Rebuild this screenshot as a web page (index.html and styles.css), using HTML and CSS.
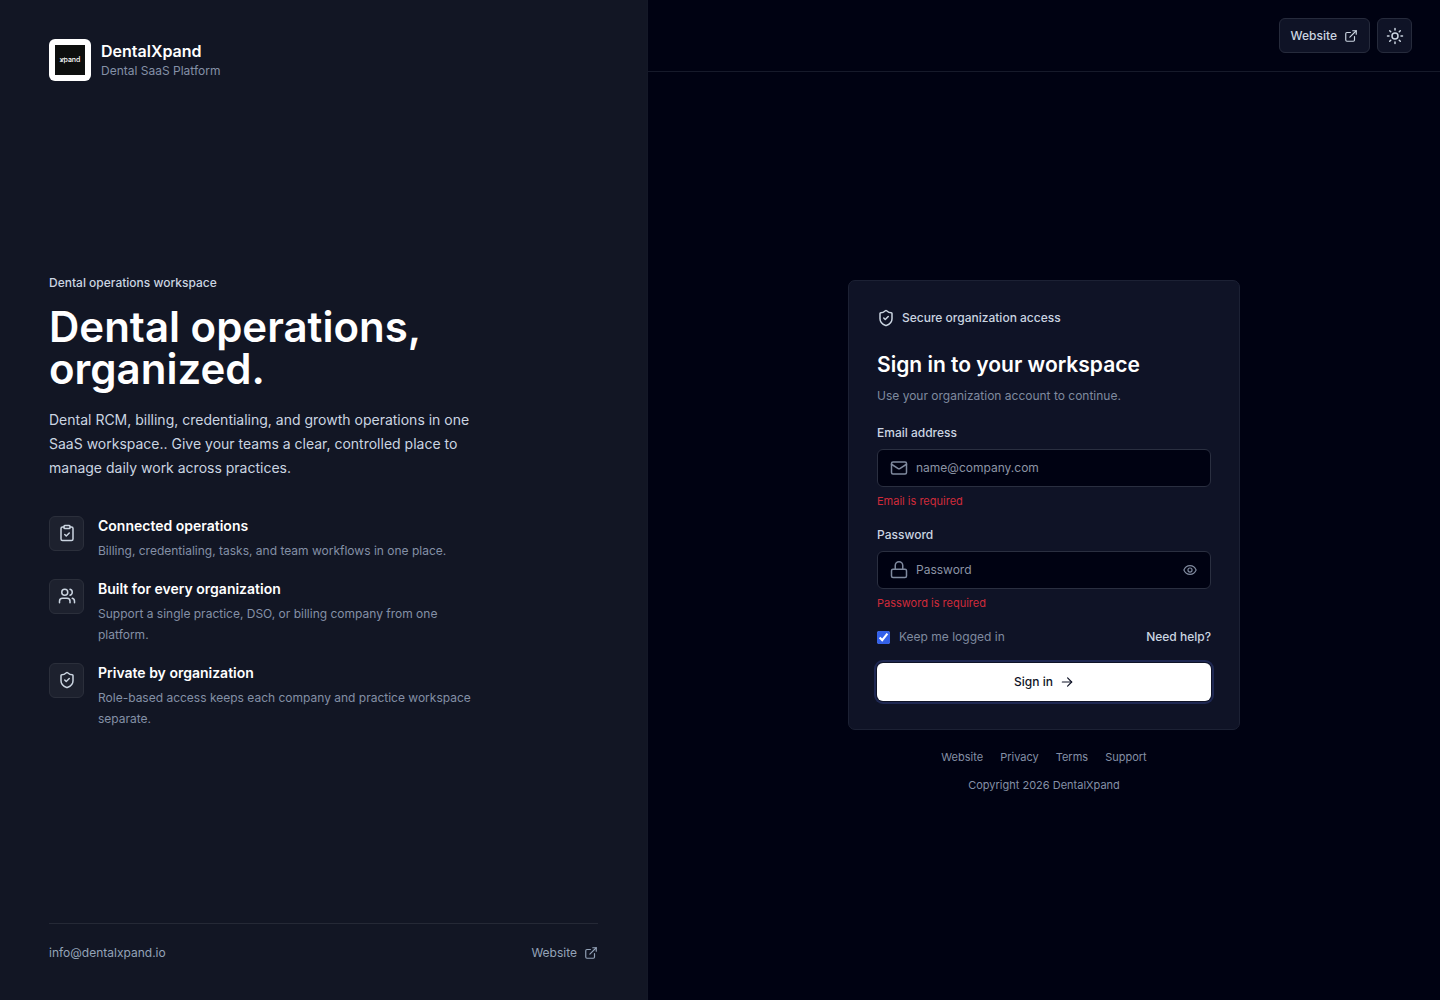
FILE: index.html
```html
<!DOCTYPE html>
<html lang="en">
<head>
  <meta charset="UTF-8" />
  <meta name="viewport" content="width=device-width, initial-scale=1" />
  <title>Sign in - DentalXpand</title>
  <link rel="stylesheet" href="styles.css">
</head>
<body>
  <div class="layout">
    <aside class="intro">
      <div class="brand">
        <div class="brand-logo">
          <svg viewBox="0 0 30 30"><rect width="30" height="30" fill="#0d0f0e"/><text x="15" y="17" text-anchor="middle">xpand</text><path d="M6 17 9.500 12.500" stroke="#fff" stroke-width=".8"/></svg>
        </div>
        <div>
          <div class="brand-name">DentalXpand</div>
          <div class="brand-tag">Dental SaaS Platform</div>
        </div>
      </div>

      <div class="pitch">
        <p class="eyebrow">Dental operations workspace</p>
        <h1>Dental operations, organized.</h1>
        <p class="lead">Dental RCM, billing, credentialing, and growth operations in one SaaS workspace.. Give your teams a clear, controlled place to manage daily work across practices.</p>
        <ul class="features">
          <li>
            <span class="feature-icon">
              <svg class="icon" viewBox="0 0 24 24"><rect x="8" y="2" width="8" height="4" rx="1"/><path d="M16 4h2a2 2 0 0 1 2 2v14a2 2 0 0 1-2 2H6a2 2 0 0 1-2-2V6a2 2 0 0 1 2-2h2"/><path d="m9 14 2 2 4-4"/></svg>
            </span>
            <div>
              <h3>Connected operations</h3>
              <p>Billing, credentialing, tasks, and team workflows in one place.</p>
            </div>
          </li>
          <li>
            <span class="feature-icon">
              <svg class="icon" viewBox="0 0 24 24"><path d="M16 21v-2a4 4 0 0 0-4-4H6a4 4 0 0 0-4 4v2"/><circle cx="9" cy="7" r="4"/><path d="M22 21v-2a4 4 0 0 0-3-3.870"/><path d="M16 3.130a4 4 0 0 1 0 7.750"/></svg>
            </span>
            <div>
              <h3>Built for every organization</h3>
              <p>Support a single practice, DSO, or billing company from one platform.</p>
            </div>
          </li>
          <li>
            <span class="feature-icon">
              <svg class="icon" viewBox="0 0 24 24"><path d="M20 13c0 5-3.500 7.500-7.660 8.950a1 1 0 0 1-.67-.01C7.500 20.500 4 18 4 13V6a1 1 0 0 1 1-1c2 0 4.500-1.200 6.240-2.720a1.170 1.170 0 0 1 1.520 0C14.510 3.810 17 5 19 5a1 1 0 0 1 1 1z"/><path d="m9 12 2 2 4-4"/></svg>
            </span>
            <div>
              <h3>Private by organization</h3>
              <p>Role-based access keeps each company and practice workspace separate.</p>
            </div>
          </li>
        </ul>
      </div>

      <footer class="intro-footer">
        <a href="mailto:info@dentalxpand.io">info@dentalxpand.io</a>
        <a href="#">Website
          <svg class="icon icon-sm" viewBox="0 0 24 24"><path d="M15 3h6v6"/><path d="M10 14 21 3"/><path d="M18 13v6a2 2 0 0 1-2 2H5a2 2 0 0 1-2-2V8a2 2 0 0 1 2-2h6"/></svg>
        </a>
      </footer>
    </aside>

    <div class="panel">
      <header class="topbar">
        <a class="top-btn" href="#">Website
          <svg class="icon icon-sm" viewBox="0 0 24 24"><path d="M15 3h6v6"/><path d="M10 14 21 3"/><path d="M18 13v6a2 2 0 0 1-2 2H5a2 2 0 0 1-2-2V8a2 2 0 0 1 2-2h6"/></svg>
        </a>
        <button class="top-btn theme-btn" type="button" aria-label="Toggle theme">
          <svg class="icon" viewBox="0 0 24 24"><circle cx="12" cy="12" r="4"/><path d="M12 2v2M12 20v2M4.930 4.930l1.410 1.410M17.660 17.660l1.410 1.410M2 12h2M20 12h2M6.340 17.660l-1.410 1.410M19.070 4.930l-1.410 1.410"/></svg>
        </button>
      </header>

      <main class="content">
        <section class="card">
          <div class="secure">
            <svg class="icon" viewBox="0 0 24 24"><path d="M20 13c0 5-3.500 7.500-7.660 8.950a1 1 0 0 1-.67-.01C7.500 20.500 4 18 4 13V6a1 1 0 0 1 1-1c2 0 4.500-1.200 6.240-2.720a1.170 1.170 0 0 1 1.520 0C14.510 3.810 17 5 19 5a1 1 0 0 1 1 1z"/><path d="m9 12 2 2 4-4"/></svg>
            Secure organization access
          </div>
          <h2>Sign in to your workspace</h2>
          <p class="sub">Use your organization account to continue.</p>

          <form>
            <div class="field">
              <label for="email">Email address</label>
              <div class="control">
                <svg class="icon" viewBox="0 0 24 24"><rect x="2" y="4" width="20" height="16" rx="2"/><path d="m22 7-8.970 5.700a1.940 1.940 0 0 1-2.060 0L2 7"/></svg>
                <input id="email" type="email" placeholder="name@company.com">
              </div>
              <p class="error">Email is required</p>
            </div>
            <div class="field">
              <label for="password">Password</label>
              <div class="control">
                <svg class="icon" viewBox="0 0 24 24"><rect x="2" y="11" width="20" height="11" rx="2"/><path d="M7 11V6a5 5 0 0 1 10 0v5"/></svg>
                <input id="password" type="password" placeholder="Password">
                <button class="eye-btn" type="button" aria-label="Show password">
                  <svg class="icon icon-sm" viewBox="0 0 24 24"><path d="M1.500 12C3.500 7 7.300 4.500 12 4.500S20.500 7 22.500 12c-2 5-5.800 7.500-10.500 7.500S3.500 17 1.500 12z"/><circle cx="12" cy="12" r="3.500"/></svg>
                </button>
              </div>
              <p class="error">Password is required</p>
            </div>
            <div class="options">
              <label class="keep"><input type="checkbox" checked> Keep me logged in</label>
              <a href="#">Need help?</a>
            </div>
            <button class="submit" type="submit">Sign in
              <svg class="icon icon-sm" viewBox="0 0 24 24"><path d="M4 12h16"/><path d="m13 5 7 7-7 7"/></svg>
            </button>
          </form>
        </section>

        <nav class="links">
          <a href="#">Website</a>
          <a href="#">Privacy</a>
          <a href="#">Terms</a>
          <a href="#">Support</a>
        </nav>
        <p class="copyright">Copyright 2026 DentalXpand</p>
      </main>
    </div>
  </div>
</body>
</html>
```

FILE: styles.css
```css
* { box-sizing: border-box; }
body { margin: 0; font-family: Inter, "Liberation Sans", sans-serif; font-size: 12px; line-height: 18px; background: #000212; color: #cbd5e1; }
h1, h2, h3, p, ul { margin: 0; padding: 0; }
a { color: inherit; text-decoration: none; }
button, input { font: inherit; }
.icon { width: 18px; height: 18px; flex: none; fill: none; stroke: currentColor; stroke-width: 2; stroke-linecap: round; stroke-linejoin: round; }
.icon-sm { width: 14px; height: 14px; }

.layout { display: grid; grid-template-columns: 45% 55%; min-height: 100vh; }

/* left side */
.intro { display: flex; flex-direction: column; justify-content: space-between; padding: 39px 49px 38px; background: #121624; border-right: 1px solid #141827; }
.brand { display: flex; align-items: center; gap: 10px; }
.brand-logo { width: 42px; height: 42px; padding: 6px; border-radius: 6px; background: #fff; }
.brand-logo svg { display: block; width: 30px; height: 30px; }
.brand-logo text { fill: #fff; font-size: 7px; font-weight: 500; }
.brand-name { color: #fff; font-size: 16px; font-weight: 600; line-height: 22px; }
.brand-tag { color: #8490a6; }
.eyebrow { color: #cbd5e1; font-weight: 500; }
.pitch { padding-bottom: 2px; }
.pitch h1 { max-width: 440px; margin-top: 14px; color: #fff; font-size: 42px; font-weight: 600; line-height: 42px; }
.lead { max-width: 440px; margin-top: 18px; font-size: 14px; line-height: 24px; }
.features { display: flex; flex-direction: column; gap: 18px; max-width: 440px; margin-top: 36px; list-style: none; }
.features li { display: flex; gap: 14px; }
.feature-icon { display: flex; align-items: center; justify-content: center; flex: none; width: 35px; height: 35px; border: 1px solid #2b2f3b; border-radius: 6px; background: #1d212e; }
.features h3 { color: #fff; font-size: 14px; font-weight: 600; line-height: 20px; }
.features p { margin-top: 4px; color: #8490a6; line-height: 21px; }
.intro-footer { display: flex; justify-content: space-between; padding-top: 20px; border-top: 1px solid #252936; color: #94a3b8; }
.intro-footer a { display: flex; align-items: center; gap: 7px; }

/* right side */
.panel { display: flex; flex-direction: column; }
.topbar { display: flex; justify-content: flex-end; gap: 7px; padding: 18px 28px; border-bottom: 1px solid #161a2a; }
.top-btn { display: flex; align-items: center; gap: 7px; height: 35px; padding: 0 11px; border: 1px solid #262b3c; border-radius: 6px; background: #0f1326; color: #cbd5e1; font-weight: 500; }
.theme-btn { justify-content: center; width: 35px; padding: 0; }
.content { display: flex; flex: 1; flex-direction: column; align-items: center; justify-content: center; }
.card { width: 100%; max-width: 392px; padding: 28px; border: 1px solid #1c2134; border-radius: 7px; background: #0f1326; }
.secure { display: flex; align-items: center; gap: 7px; font-weight: 500; }
.card h2 { margin-top: 24px; color: #fff; font-size: 21px; font-weight: 600; line-height: 28px; }
.sub { margin-top: 8px; color: #7f8a9f; }
form { margin-top: 19px; }
.field { margin-bottom: 17px; }
.field label { display: block; margin-bottom: 7px; font-weight: 500; }
.control { display: flex; align-items: center; gap: 8px; height: 38px; padding: 0 12px; border: 1px solid #2a2f40; border-radius: 6px; background: #000212; color: #7f8a9f; }
.control input { flex: 1; min-width: 0; padding: 0; border: 0; outline: 0; background: none; color: #fff; }
.control input::placeholder { color: #8c94a5; opacity: 1; }
.eye-btn { display: flex; padding: 0; border: 0; margin-right: 1px; background: none; color: inherit; }
.error { margin-top: 6px; color: #cf2b3a; font-size: 11px; line-height: 16px; }
.options { display: flex; justify-content: space-between; font-weight: 500; }
.keep { display: flex; align-items: center; gap: 9px; color: #7f8a9f; font-weight: 400; }
.keep input { width: 13px; height: 13px; margin: 0; accent-color: #3461e8; }
.submit { display: flex; align-items: center; justify-content: center; gap: 7px; width: 100%; height: 38px; margin-top: 17px; border: 0; border-radius: 6px; background: #fff; color: #0f1326; font-weight: 500; box-shadow: 0 0 0 1px #0f1326, 0 0 0 3px #1f2852; }
.links { display: flex; gap: 17px; margin-top: 20px; color: #8490a6; font-size: 11px; line-height: 14px; }
.copyright { margin-top: 14px; color: #8490a6; font-size: 11px; line-height: 14px; }
```
